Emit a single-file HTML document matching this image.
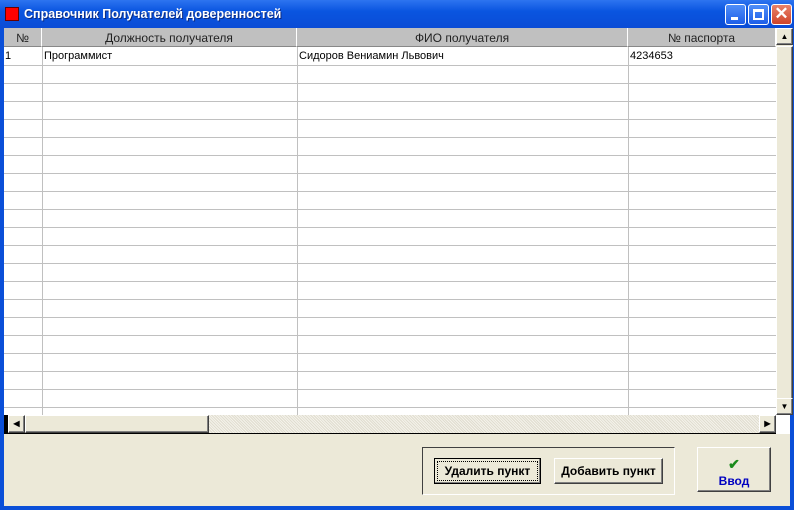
<!DOCTYPE html>
<html><head><meta charset="utf-8"><style>
*{margin:0;padding:0;box-sizing:border-box}
body{width:794px;height:510px;overflow:hidden;background:#0A4FD8;font-family:"Liberation Sans",sans-serif;position:relative}
.title{position:absolute;left:0;top:0;width:794px;height:28px;background:linear-gradient(#2D74F0,#0A55E0 40%,#0A4CD6);}
.title .t{position:absolute;left:24px;top:7px;color:#fff;font-weight:bold;font-size:12.5px;text-shadow:1px 1px #0a2a80}
.ic{position:absolute;left:5px;top:7px;width:14px;height:14px;background:#f00;border:1px solid #600}
.tb{position:absolute;top:4px;width:21px;height:21px;border:1px solid #fff;border-radius:3px;background:linear-gradient(#4f8ef8,#1e5ee8)}
.grid{position:absolute;left:4px;top:28px;width:772px;height:387px;background:#fff;overflow:hidden}
.hd{position:absolute;top:0;height:19px;background:#c0c0c0;border-right:1px solid #fff;border-bottom:1px solid #888;font-size:12px;text-align:center;line-height:20px;color:#222}
.hl{position:absolute;left:0;width:772px;height:1px;background:#c0c0c0}
.vl{position:absolute;top:19px;width:1px;height:370px;background:#c0c0c0}
.c{position:absolute;top:22px;font-size:11px}
.vs{position:absolute;left:776px;top:28px;width:17px;height:387px;background:#ece9d8}
.hs{position:absolute;left:4px;top:415px;width:772px;height:19px;background:repeating-linear-gradient(45deg,#f4f2ea 0 1px,#e0ddd0 1px 2px);border-bottom:1px solid #000}
.btn{position:absolute;background:#ece9d8;border:1px solid;border-color:#fff #404040 #404040 #fff;box-shadow:inset -1px -1px #808080;font-size:12px;font-weight:bold;text-align:center}
.bot{position:absolute;left:4px;top:434px;width:786px;height:72px;background:#ece9d8}
</style></head><body>
<div class="title"><div class="ic"></div><div class="t">Справочник Получателей доверенностей</div>
<div class="tb" style="left:725px"><div style="position:absolute;left:5px;top:12px;width:7px;height:3px;background:#fff"></div></div>
<div class="tb" style="left:748px"><div style="position:absolute;left:4px;top:4px;width:11px;height:11px;border:2px solid #fff;border-top-width:3px"></div></div>
<div class="tb" style="left:771px;background:linear-gradient(#e8826a,#d0442a);color:#fff;font-size:17px;line-height:18px;text-align:center;font-weight:bold">✕</div>
</div>
<div class="grid">
<div class="hd" style="left:0;width:38px">№</div>
<div class="hd" style="left:38px;width:255px">Должность получателя</div>
<div class="hd" style="left:293px;width:331px">ФИО получателя</div>
<div class="hd" style="left:624px;width:148px">№ паспорта</div>
<div class="vl" style="left:38px"></div><div class="vl" style="left:293px"></div><div class="vl" style="left:624px"></div>
<div class="hl" style="top:37px"></div><div class="hl" style="top:55px"></div><div class="hl" style="top:73px"></div><div class="hl" style="top:91px"></div><div class="hl" style="top:109px"></div><div class="hl" style="top:127px"></div><div class="hl" style="top:145px"></div><div class="hl" style="top:163px"></div><div class="hl" style="top:181px"></div><div class="hl" style="top:199px"></div><div class="hl" style="top:217px"></div><div class="hl" style="top:235px"></div><div class="hl" style="top:253px"></div><div class="hl" style="top:271px"></div><div class="hl" style="top:289px"></div><div class="hl" style="top:307px"></div><div class="hl" style="top:325px"></div><div class="hl" style="top:343px"></div><div class="hl" style="top:361px"></div><div class="hl" style="top:379px"></div>
<div class="c" style="left:1px">1</div><div class="c" style="left:40px">Программист</div><div class="c" style="left:295px">Сидоров Вениамин Львович</div><div class="c" style="left:626px">4234653</div>
</div>
<div class="vs"><div class="btn" style="left:0;top:0;width:17px;height:17px;font-size:8px;line-height:15px">▲</div>
<div class="btn" style="left:0;top:18px;width:17px;height:355px"></div>
<div class="btn" style="left:0;top:370px;width:17px;height:17px;font-size:8px;line-height:15px">▼</div></div>
<div class="hs"><div style="position:absolute;left:0;top:0;width:4px;height:18px;background:#000"></div>
<div class="btn" style="left:4px;top:0;width:17px;height:18px;font-size:8px;line-height:16px">◀</div>
<div class="btn" style="left:21px;top:0;width:184px;height:18px"></div>
<div class="btn" style="left:755px;top:0;width:17px;height:18px;font-size:8px;line-height:16px">▶</div></div>
<div style="position:absolute;left:776px;top:415px;width:14px;height:19px;background:#fff"></div>
<div class="bot"></div>
<div style="position:absolute;left:422px;top:447px;width:253px;height:48px;border:1px solid;border-color:#404040 #fff #fff #404040"></div>
<div class="btn" style="left:434px;top:458px;width:107px;height:26px;line-height:24px;border:1px solid #000;outline:1px dotted #000;outline-offset:-4px">Удалить пункт</div>
<div class="btn" style="left:554px;top:458px;width:109px;height:26px;line-height:24px">Добавить пункт</div>
<div class="btn" style="left:697px;top:447px;width:74px;height:45px;color:#0000c0;padding-top:8px;line-height:16px"><span style="color:#1a8a1a;font-size:14px">✔</span><br>Ввод</div>
</body></html>
